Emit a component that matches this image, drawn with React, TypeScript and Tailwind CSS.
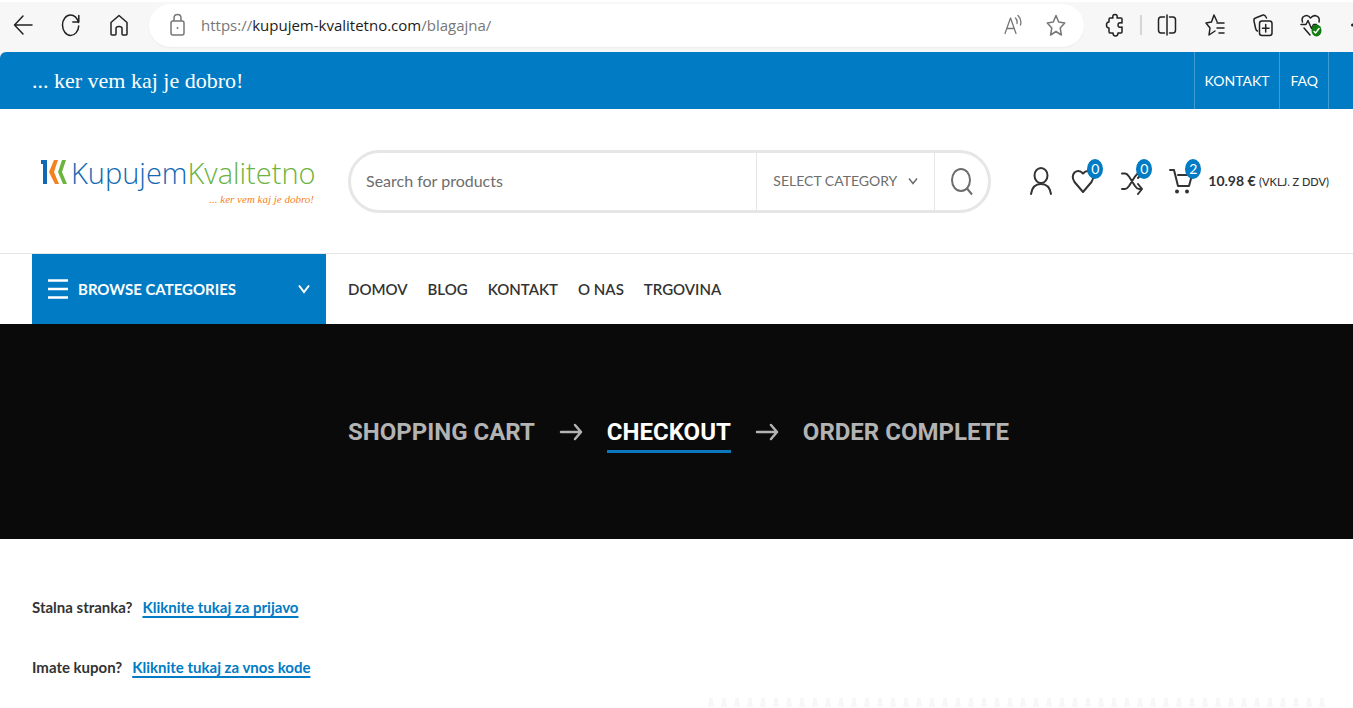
import type { ReactNode } from 'react'

const menuLinks = ['DOMOV', 'BLOG', 'KONTAKT', 'O NAS', 'TRGOVINA']

const notices = [
  { id: 'login', question: 'Stalna stranka?', action: 'Kliknite tukaj za prijavo' },
  { id: 'coupon', question: 'Imate kupon?', action: 'Kliknite tukaj za vnos kode' },
]

function Icon({ children, className = '' }: { children: ReactNode; className?: string }) {
  return (
    <svg
      viewBox="0 0 24 28"
      fill="none"
      stroke="currentColor"
      strokeWidth="1.5"
      strokeLinecap="round"
      strokeLinejoin="round"
      className={`h-7 w-6 flex-none ${className}`}
      aria-hidden="true"
    >
      {children}
    </svg>
  )
}

function ToolButton({ label, children }: { label: string; children: ReactNode }) {
  return (
    <button type="button" aria-label={label} className="flex-none">
      <Icon>{children}</Icon>
    </button>
  )
}

function Badge({ count }: { count: number }) {
  return (
    <span className="absolute -top-2 left-4 flex h-5 w-4 items-center justify-center rounded-[50%] bg-[#007bc4] text-sm text-white">
      {count}
    </span>
  )
}

function BrowserBar() {
  return (
    <div className="flex h-[52px] items-center overflow-hidden border-t-2 border-white bg-[#f7f7f7] pb-1 pl-[11px] text-[#222]">
      <div className="flex gap-6">
        <ToolButton label="Back">
          <path d="M3.500 14H21M12 5L3.500 14l8.500 9" />
        </ToolButton>
        <ToolButton label="Refresh">
          <path d="M19.500 11.500C18 6.500 15 4 11.500 4 7 4 3.500 8.500 3.500 14S7 24.500 11.500 24.500 19.500 20 19.700 15M19.800 4.500v6.500h-6" />
        </ToolButton>
        <ToolButton label="Home">
          <path d="M4 23V11.500L12 4.500l8 7V23q0 1-1 1h-3q-1 0-1-1v-5.500q0-2-3-2t-3 2V23q0 1-1 1H5q-1 0-1-1z" />
        </ToolButton>
      </div>

      <div className="ml-[18px] flex h-[43px] flex-1 items-center rounded-full bg-white pr-4 pl-5 shadow-xs">
        <svg viewBox="0 0 16 28" fill="none" stroke="#777" strokeWidth="1.500" className="h-7 w-4 flex-none" aria-hidden="true">
          <rect x="2" y="10" width="13" height="14" rx="2" />
          <path d="M5 10V7q0-3.500 3.500-3.500T12 7v3" />
          <circle cx="8.500" cy="17" r="1" fill="#777" stroke="none" />
        </svg>
        <p className="ml-4 flex-1 font-['Open_Sans',sans-serif] text-[15px] text-[#777]">
          https://<span className="text-[#1b1b1b]">kupujem-kvalitetno.com</span>/blagajna/
        </p>
        <div className="flex gap-[19px] text-[#777]">
          <ToolButton label="Read aloud">
            <path d="M4 22.500L9.500 7 15 22.500M6 17.500h7M14.500 7q2 2 1.500 5.500M17 4.500q4 4 2.500 9.500" strokeWidth="1.300" />
          </ToolButton>
          <ToolButton label="Add to favourites">
            <path d="M12 4.500l2.700 6.500 6 1-4.500 5 1.200 7-5.400-3.500L6.600 24l1.200-7-4.500-5 6-1z" />
          </ToolButton>
        </div>
      </div>

      <div className="ml-[19px] flex items-center">
        <ToolButton label="Extensions">
          <path d="M7 7h3q-1-3.500 2-3.500T14 7h4q1 0 1 1v4q-4-1-4 2t4 2v5q0 1-1 1h-3q0 3-2.500 3T10 22H7q-1 0-1-1.500V17q-2.500 0-2.500-3T6 11V8.500Q6 7 7 7z" />
        </ToolButton>
        <span className="mr-[13px] ml-[13px] h-5 w-0.5 bg-[#d5d5d5]" />
        <div className="flex gap-6">
          <ToolButton label="Split screen">
            <path d="M9.500 6H6Q3.500 6 3.500 9v10q0 3 2.500 3h3.500M14.500 6H18q2.500 0 2.500 3v10q0 3-2.500 3h-3.500M12 4v20" />
          </ToolButton>
          <ToolButton label="Favourites">
            <path d="M14 10.500L11 4l-2.500 7-5.500 1 4 5-1 7 6-4M14 12h7M14 17h7M16 22h5" />
          </ToolButton>
          <ToolButton label="Collections">
            <rect x="8.500" y="10" width="12.500" height="14.500" rx="2.500" />
            <path d="M14.700 13.500v7.500M11.500 17.200h6.500M6.500 20Q5 19.500 4.500 17L3 10q-.5-2.500 1.500-3L12 4q2-.5 3 2l.5 1" />
          </ToolButton>
          <ToolButton label="Browser essentials">
            <path d="M3.500 11C1.500 5 8 2.500 11.500 7 15.500 2.500 21.500 5 20 11M2 13.500h5l2-4 3.500 8 2-4h3M5 17l6 7" />
            <ellipse cx="17.500" cy="19.500" rx="5" ry="6" fill="#107c10" stroke="none" />
            <path d="M15 20.500l1.500 1.500 3.500-4.500" stroke="#fff" />
          </ToolButton>
          <svg viewBox="0 0 6 28" className="h-7 w-1.5" aria-hidden="true">
            <circle cx="5.500" cy="14" r="1.500" fill="currentColor" />
          </svg>
        </div>
      </div>
    </div>
  )
}

function TopBar() {
  return (
    <div className="bg-[#f7f7f7]">
      <div className="flex h-[57px] items-center rounded-tl-md bg-[#007bc4] pr-6 pl-8 text-white">
        <p className="flex-1 font-['Liberation_Serif',serif] text-[22px]">... ker vem kaj je dobro!</p>
        <nav className="flex self-stretch border-r border-white/25 text-sm">
          <a href="#kontakt" className="flex items-center border-l border-white/25 px-2.5">KONTAKT</a>
          <a href="#faq" className="flex items-center border-l border-white/25 px-2.5">FAQ</a>
        </nav>
      </div>
    </div>
  )
}

function Logo() {
  return (
    <a href="#home" className="flex w-[294px] flex-none flex-col pr-3 pl-2">
      <span className="flex items-center">
        <svg viewBox="0 0 30 28" className="mr-px h-7 w-[30px] flex-none" aria-hidden="true">
          <path d="M1 1h6v24H3V5H1z" fill="#1268b3" />
          <path d="M14 1h4l-4 12 5 12h-4L9 13z" fill="#f58220" />
          <path d="M22 1h4l-4 12 5 12h-4l-5-12z" fill="#6cb33f" />
        </svg>
        <span className="font-['Open_Sans',sans-serif] text-[29px] leading-9 font-light text-[#1268b3]">
          Kupujem<span className="text-[#6cb33f]">Kvalitetno</span>
        </span>
      </span>
      <span className="self-end font-['Liberation_Serif',serif] text-[11px] leading-4 text-[#f58220] italic">... ker vem kaj je dobro!</span>
    </a>
  )
}

function Search() {
  return (
    <form className="flex h-[63px] flex-1 items-stretch overflow-hidden rounded-full border-[3px] border-[#e6e6e6] text-[#6d6d6d]">
      <input
        type="search"
        aria-label="Search for products"
        placeholder="Search for products"
        className="min-w-0 flex-1 pl-[15px] text-base outline-none placeholder:text-[#6d6d6d]"
      />
      <div className="relative flex w-[179px] flex-none items-center border-x border-[#e6e6e6]">
        <select aria-label="Category" className="h-full w-full appearance-none pl-4 text-sm">
          <option>SELECT CATEGORY</option>
        </select>
        <svg viewBox="0 0 10 8" fill="none" stroke="currentColor" strokeWidth="1.500" className="pointer-events-none absolute right-4 h-2 w-2.5" aria-hidden="true">
          <path d="M1 1.500l4 5 4-5" />
        </svg>
      </div>
      <button type="submit" aria-label="Search" className="flex w-[53px] flex-none items-center justify-center">
        <svg viewBox="0 0 24 30" fill="none" stroke="currentColor" strokeWidth="2" className="h-[30px] w-6" aria-hidden="true">
          <ellipse cx="11" cy="14" rx="9" ry="11" />
          <path d="M17 22.500l5 6" />
        </svg>
      </button>
    </form>
  )
}

function HeaderTools() {
  return (
    <div className="flex flex-none items-center text-[#333]">
      <a href="#account" aria-label="Account">
        <Icon>
          <ellipse cx="12" cy="8.500" rx="6.500" ry="7.500" strokeWidth="2" />
          <path d="M2 27q1.500-10 10-10t10 10" strokeWidth="2" />
        </Icon>
      </a>
      <a href="#wishlist" aria-label="Wishlist" className="relative ml-[18px]">
        <Icon>
          <path d="M12 25L3.500 15Q0 9.500 3.500 5.500 8 2 12 6.500q4-4.500 8.500-1Q24 9.500 20.500 15z" strokeWidth="2" />
        </Icon>
        <Badge count={0} />
      </a>
      <a href="#compare" aria-label="Compare" className="relative ml-[25px]">
        <Icon>
          <path d="M2 6.500h3q2 0 4 3L15 19q2 3 4 3h3M2 22h3q2 0 4-3L15 9.500q2-3 4-3h3M18 3l4 3.500-4 4.500M18 17l4 5-4 5" strokeWidth="2" />
        </Icon>
        <Badge count={0} />
      </a>
      <a href="#cart" className="relative ml-[25px] flex items-center">
        <Icon>
          <path d="M1 3h4l4 16h11l3-11H9" strokeWidth="2" />
          <circle cx="8" cy="24.500" r="2" fill="currentColor" stroke="none" />
          <circle cx="18" cy="24.500" r="2" fill="currentColor" stroke="none" />
        </Icon>
        <Badge count={2} />
        <span className="ml-[15px] text-sm font-bold whitespace-nowrap">
          10.98 € <small className="text-[11px] font-medium">(VKLJ. Z DDV)</small>
        </span>
      </a>
    </div>
  )
}

function StepArrow() {
  return (
    <svg viewBox="0 0 24 20" fill="none" stroke="currentColor" strokeWidth="2.500" strokeLinecap="round" strokeLinejoin="round" className="h-5 w-6 flex-none" aria-hidden="true">
      <path d="M2 10h20M16 3l6 7-6 7" />
    </svg>
  )
}

export default function App() {
  return (
    <div className="bg-white font-[Lato,sans-serif] text-[#333]">
      <BrowserBar />
      <TopBar />

      <header>
        <div className="flex h-[145px] items-center border-b border-[#e6e6e6] pr-6 pl-8">
          <Logo />
          <div className="mr-[38px] ml-[22px] flex flex-1">
            <Search />
          </div>
          <HeaderTools />
        </div>
        <div className="flex h-[70px] items-center pl-8">
          <button type="button" className="flex w-[294px] items-center self-stretch bg-[#007bc4] px-4 text-[15px] font-bold text-white">
            <svg viewBox="0 0 20 20" className="mr-2.5 h-5 w-5" aria-hidden="true">
              <path d="M0 1.500h20M0 10h20M0 18.500h20" stroke="currentColor" strokeWidth="2.500" />
            </svg>
            <span className="flex-1 text-left">BROWSE CATEGORIES</span>
            <svg viewBox="0 0 12 10" fill="none" stroke="currentColor" strokeWidth="2" className="h-2.5 w-3" aria-hidden="true">
              <path d="M1 1.500l5 6.500 5-6.500" />
            </svg>
          </button>
          <nav className="ml-[22px] flex gap-5 text-[15px] font-semibold">
            {menuLinks.map((link) => (
              <a key={link} href={`#${link.toLowerCase()}`}>{link}</a>
            ))}
          </nav>
        </div>
      </header>

      {/* Checkout steps */}
      <section className="flex h-[215px] items-center justify-center gap-6 bg-[#0a0a0a] pl-1 font-[Roboto,sans-serif] text-2xl leading-8 font-bold text-[#b3b3b3]">
        <a href="#cart">SHOPPING CART</a>
        <StepArrow />
        <a href="#checkout" className="-mb-1.5 border-b-[3px] border-[#0b78bd] pb-0.5 text-white">CHECKOUT</a>
        <StepArrow />
        <span>ORDER COMPLETE</span>
      </section>

      <main className="pt-14 pr-6 pl-8">
        <div className="flex flex-col gap-9 text-[15px] leading-6 font-bold">
          {notices.map((notice) => (
            <p key={notice.id}>
              {notice.question}
              <a href={`#${notice.id}`} className="ml-2.5 text-[#007bc4] underline decoration-2 underline-offset-3">
                {notice.action}
              </a>
            </p>
          ))}
        </div>

        {/* Torn edge of the order summary */}
        <div className="mt-4 ml-auto w-[48%]">
          <svg className="h-3 w-full" aria-hidden="true">
            <defs>
              <pattern id="teeth" width="13" height="12" patternUnits="userSpaceOnUse">
                <path d="M3 3h4v3l1 6H2l1-6z" fill="#f7f7f7" />
              </pattern>
            </defs>
            <rect width="100%" height="12" fill="url(#teeth)" />
          </svg>
        </div>
      </main>
    </div>
  )
}
